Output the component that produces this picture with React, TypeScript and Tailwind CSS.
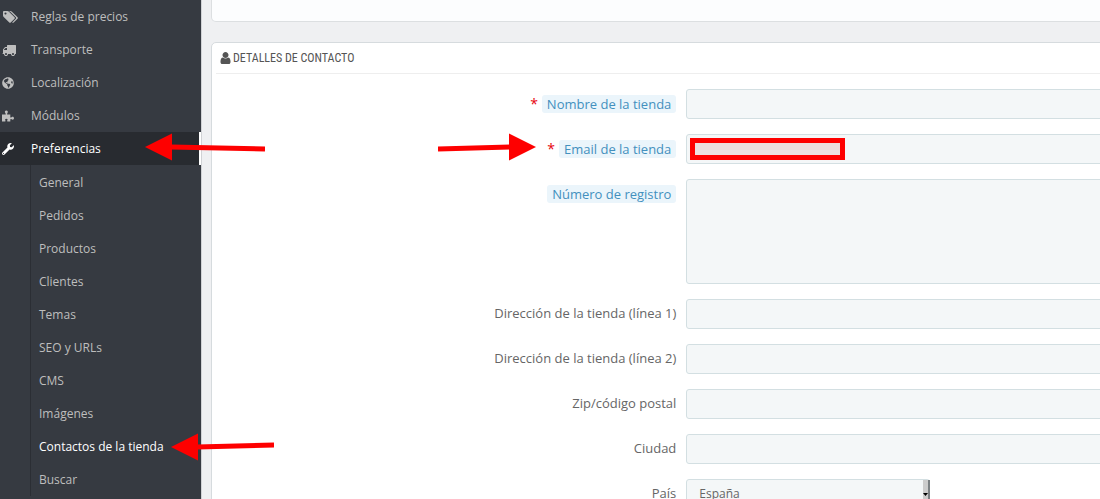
import React, { useState } from 'react';
import { FaGlobeAmericas, FaWrench } from 'react-icons/fa';

type IconProps = { className?: string };

function TagsIcon({ className }: IconProps) {
  return (
    <svg className={className} viewBox="0 0 2048 1792" fill="currentColor" aria-hidden="true">
      <path d="M576 448q0-53-37.500-90.500t-90.500-37.500-90.500 37.500-37.500 90.500 37.500 90.500 90.500 37.500 90.500-37.500 37.500-90.500zm1067 576q0 53-37 90l-491 492q-39 37-91 37-53 0-90-37l-715-716q-38-37-64.500-101t-26.500-117v-416q0-52 38-90t90-38h416q53 0 117 26.500t102 64.500l715 714q37 39 37 91zm384 0q0 53-37 90l-491 492q-39 37-91 37-36 0-59-14t-53-45l470-470q37-37 37-90 0-52-37-91l-715-714q-38-38-102-64.500t-117-26.500h224q53 0 117 26.500t102 64.500l715 714q37 39 37 91z" />
    </svg>
  );
}

function TruckIcon({ className }: IconProps) {
  return (
    <svg className={className} viewBox="0 0 1792 1792" fill="currentColor" aria-hidden="true">
      <path d="M640 1408q0-52-38-90t-90-38-90 38-38 90 38 90 90 38 90-38 38-90zm-384-512h384v-256h-158q-13 0-22 9l-195 195q-9 9-9 22v30zm1280 512q0-52-38-90t-90-38-90 38-38 90 38 90 90 38 90-38 38-90zm256-1088v1024q0 15-4 26.500t-13.500 18.500-16.500 11.500-23.500 6-22.500 2-25.500 0-22.500-.5q0 106-75 181t-181 75-181-75-75-181h-384q0 106-75 181t-181 75-181-75-75-181h-64q-3 0-22.500.5t-25.500 0-22.500-2-23.500-6-16.500-11.500-13.500-18.500-4-26.500q0-26 19-45t45-19v-320q0-8-.5-35t0-38 2.500-34.500 6.500-37 14-30.500 22.500-30l198-198q19-19 50.500-32t58.500-13h160v-192q0-26 19-45t45-19h1024q26 0 45 19t19 45z" />
    </svg>
  );
}

function PuzzleIcon({ className }: IconProps) {
  return (
    <svg className={className} viewBox="0 0 13 13" fill="currentColor" aria-hidden="true">
      <path d="M0 5H3.500C4.300 5 4.200 4.200 3.700 3.500C2.500 1.800 3.200 0.500 4.700 0.500S6.900 1.800 5.800 3.500C5.300 4.300 5.400 5 6.200 5H9V7.500C9 8.300 9.700 8.400 10.300 7.900C11.700 6.800 13 7.600 13 9S11.700 11.100 10.300 10.100C9.600 9.600 9 9.800 9 10.500V12.500H6C5.400 12.500 5.400 12 5.700 11.500C6.500 10.300 5.900 9.500 4.700 9.500S3 10.300 3.700 11.500C4 12.100 3.900 12.500 3.300 12.500H0Z" />
    </svg>
  );
}

function UserIcon({ className }: IconProps) {
  return (
    <svg className={className} viewBox="256 128 1280 1536" fill="currentColor" aria-hidden="true">
      <path d="M1536 1399q0 109-62.500 187t-150.500 78h-854q-88 0-150.500-78t-62.500-187q0-85 8.500-160.500t31.500-152 58.500-131 94-89 134.500-34.500q131 128 313 128t313-128q76 0 134.500 34.500t94 89 58.500 131 31.500 152 8.500 160.500zm-256-887q0 159-112.500 271.500t-271.500 112.500-271.500-112.500-112.500-271.500 112.500-271.500 271.500-112.500 271.500 112.500 112.500 271.500z" />
    </svg>
  );
}

const menuItems = [
  { label: 'Reglas de precios', icon: TagsIcon, iconClass: 'w-4 h-3.5' },
  { label: 'Transporte', icon: TruckIcon, iconClass: 'w-3.5 h-3.5' },
  { label: 'Localización', icon: FaGlobeAmericas, iconClass: 'w-3 h-3' },
  { label: 'Módulos', icon: PuzzleIcon, iconClass: 'w-3 h-3' },
  { label: 'Preferencias', icon: FaWrench, iconClass: 'w-3 h-3', active: true }
];

const subItems = [
  'General',
  'Pedidos',
  'Productos',
  'Clientes',
  'Temas',
  'SEO y URLs',
  'CMS',
  'Imágenes',
  'Contactos de la tienda',
  'Buscar'
];

const fields = [
  { id: 'name', label: 'Nombre de la tienda', required: true, hint: true },
  { id: 'email', label: 'Email de la tienda', required: true, hint: true, marked: true },
  { id: 'registry', label: 'Número de registro', hint: true, multiline: true },
  { id: 'address1', label: 'Dirección de la tienda (línea 1)' },
  { id: 'address2', label: 'Dirección de la tienda (línea 2)' },
  { id: 'zip', label: 'Zip/código postal' },
  { id: 'city', label: 'Ciudad' }
];

const controlClass =
  'block w-full rounded-[3px] border border-[#d3dfe2] bg-[#f4f7f8] px-3 text-xs text-[#666] outline-none';

function Sidebar() {
  return (
    <nav className="w-[201px] shrink-0 bg-[#363a41] text-xs text-[#bebebe]">
      <ul>
        {menuItems.map(({ label, icon: Icon, iconClass, active }) => (
          <li key={label} className={active ? 'border-r-2 border-white bg-[#282b30] text-white' : ''}>
            <a href="#" className="flex h-[33px] items-center">
              <span className="flex w-[31px] shrink-0 pl-0.5">
                <Icon className={iconClass} />
              </span>
              {label}
            </a>
          </li>
        ))}
      </ul>
      <ul className="ml-[30px] border-l border-[#2b2e34] pt-px">
        {subItems.map((item) => (
          <li key={item}>
            <a
              href="#"
              className={`flex h-[33px] items-center pl-2 ${item === 'Contactos de la tienda' ? 'text-white' : ''}`}
            >
              {item}
            </a>
          </li>
        ))}
      </ul>
    </nav>
  );
}

function Row({ children }: { children: React.ReactNode }) {
  return <div className="grid grid-cols-[52fr_48fr] items-start">{children}</div>;
}

function Arrow({ className, length, rise, flip }: { className: string; length: number; rise: number; flip?: boolean }) {
  return (
    <svg
      className={`pointer-events-none absolute ${className}`}
      width={length}
      height="28"
      viewBox={`0 0 ${length} 28`}
      aria-hidden="true"
    >
      <g fill="#fe0000" stroke="#fe0000" transform={flip ? `translate(${length} 0) scale(-1 1)` : undefined}>
        <path d="M0 14 27 0.5V27.5Z" stroke="none" />
        <path d={`M26 14 ${length} ${14 + rise}`} strokeWidth="5" />
      </g>
    </svg>
  );
}

export default function App() {
  const [values, setValues] = useState<Record<string, string>>({});

  const update = (id: string, value: string) => setValues({ ...values, [id]: value });

  return (
    <div className="relative flex h-screen overflow-hidden bg-[#eff0f2] font-['Open_Sans',sans-serif]">
      <Sidebar />

      <main className="min-w-0 flex-1 overflow-hidden border-l border-[#d0d2d5] pl-[9px]">
        <div className="-mr-3 mb-5 h-[22px] rounded-b-[5px] border border-t-0 border-[#dcdfe1] bg-[#fcfdfe]" />

        <section className="-mr-3 rounded-[5px] border border-[#d6dbde] bg-white px-1 pb-5">
          <h3 className="flex h-[31px] items-center gap-0.5 border-b border-[#eee] pl-1 font-['Roboto_Condensed',sans-serif] text-xs text-[#555]">
            <UserIcon className="h-3 w-[11px]" />
            DETALLES DE CONTACTO
          </h3>

          <form className="flex flex-col gap-[15px] pt-[15px]">
            {fields.map((field) => (
              <Row key={field.id}>
                <div className="flex h-[30px] items-center justify-end pr-[3px] text-[13px] text-[#666]">
                  {field.required && <span className="mr-1 text-sm text-red-600">*</span>}
                  <label
                    htmlFor={field.id}
                    className={field.hint ? 'rounded-[3px] bg-[#ebf5fb] px-[5px] leading-[18px] text-[#4390be]' : ''}
                  >
                    {field.label}
                  </label>
                </div>
                <div className="relative pl-[7px]">
                  {field.multiline ? (
                    <textarea
                      id={field.id}
                      value={values[field.id] ?? ''}
                      onChange={(e) => update(field.id, e.target.value)}
                      className={`${controlClass} h-[105px] resize-none`}
                    />
                  ) : (
                    <input
                      id={field.id}
                      type="text"
                      value={values[field.id] ?? ''}
                      onChange={(e) => update(field.id, e.target.value)}
                      className={`${controlClass} h-[30px]`}
                    />
                  )}
                  {field.marked && (
                    <span className="pointer-events-none absolute left-[11px] top-1 h-[22px] w-[155px] border-[5px] border-[#fe0000] bg-[#eddfdf]" />
                  )}
                </div>
              </Row>
            ))}

            <Row>
              <div className="flex h-[30px] items-center justify-end pr-[3px] text-[13px] text-[#666]">
                <label htmlFor="country">País</label>
              </div>
              <div className="pl-[7px]">
                <div className="relative w-[244px]">
                  <select id="country" className={`${controlClass} h-[30px] appearance-none`}>
                    <option>España</option>
                  </select>
                  <span className="pointer-events-none absolute inset-y-px right-0 flex w-[7px] items-center border-r-2 border-[#7b8083] bg-[#ccc]">
                    <svg className="h-[3px] w-[5px]" viewBox="0 0 5 3" aria-hidden="true">
                      <path d="M0 0H5L2.500 3Z" fill="#000" />
                    </svg>
                  </span>
                </div>
              </div>
            </Row>
          </form>
        </section>
      </main>

      <Arrow className="left-[145px] top-[133px]" length={120} rise={2} />
      <Arrow className="left-[438px] top-[133px]" length={98} rise={2} flip />
      <Arrow className="left-[171px] top-[433px]" length={103} rise={-2} />
    </div>
  );
}
